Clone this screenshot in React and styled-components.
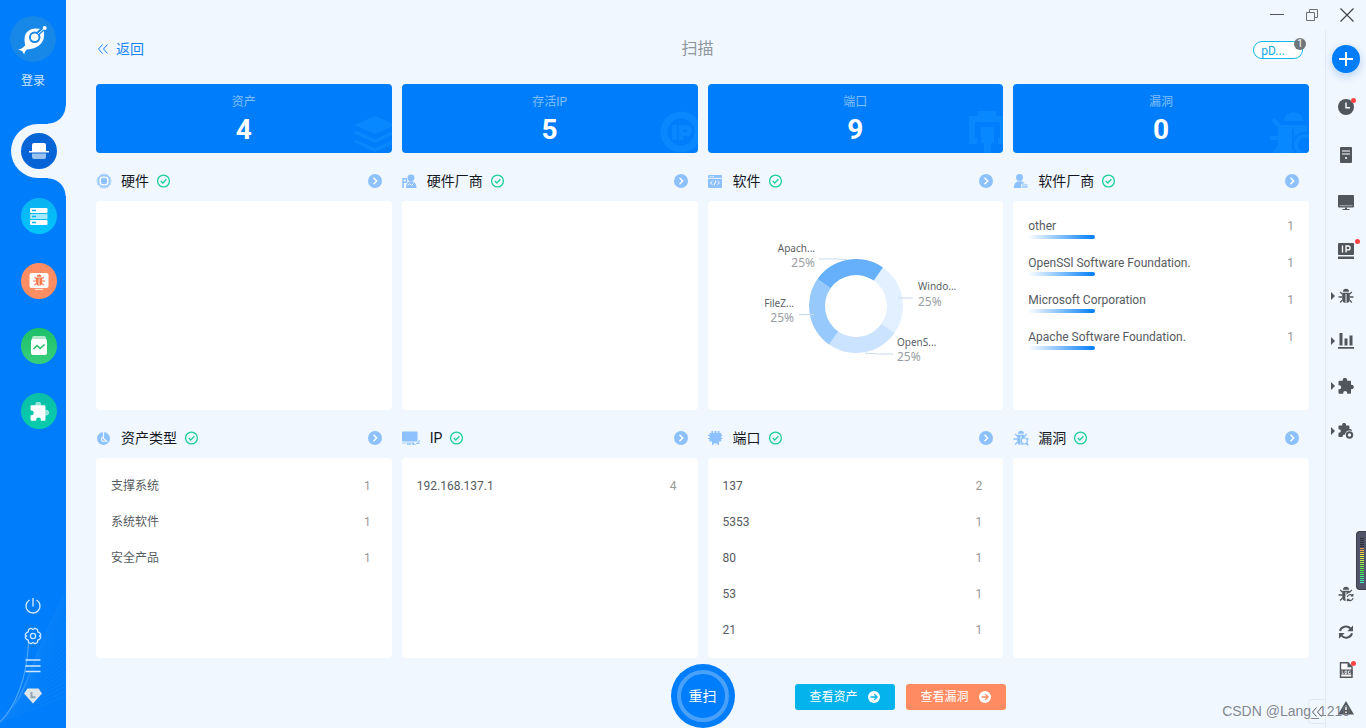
import React from 'react';
import styled, { createGlobalStyle, css } from 'styled-components';

const c = {
  blue: '#007dfa',
  page: '#f0f7ff',
  soft: '#8cc1fe',
  green: '#1ccf9b',
  dark: '#51565c',
};

const GlobalStyle = createGlobalStyle`
  *, *::before, *::after { box-sizing: border-box; }
  body {
    margin: 0;
    background: ${c.page};
    color: #51565c;
    font: 400 12px/18px Roboto, "Noto Sans CJK SC", sans-serif;
  }
  button {
    margin: 0; padding: 0; border: 0; background: none;
    font: inherit; color: inherit; cursor: pointer;
  }
  a { color: inherit; text-decoration: none; }
  ul { margin: 0; padding: 0; list-style: none; }
  h1, h2, p { margin: 0; font-weight: inherit; }
  svg { display: block; flex: none; }
`;

/* ---------- frame ---------- */

const Page = styled.div`
  position: relative;
  display: flex;
  min-height: 100vh;
  overflow: hidden;
`;

const Sidebar = styled.aside`
  position: relative;
  flex: none;
  width: 66px;
  display: flex;
  flex-direction: column;
  align-items: center;
  padding: 16px 0 22px;
  background: ${c.blue};
  color: #cfe6ff;
`;

const Swirl = styled.svg`
  position: absolute;
  left: 0;
  bottom: 0;
`;

const Login = styled.button`
  display: flex;
  flex-direction: column;
  align-items: center;
  gap: 10px;
`;

const Logo = styled.span`
  width: 46px;
  height: 46px;
  border-radius: 50%;
  background: #1787e8;
`;

const Nav = styled.nav`
  width: 100%;
  margin-top: 34px;
  display: flex;
  flex-direction: column;
  gap: 11px;
`;

const NavItem = styled.div`
  position: relative;
  height: 54px;
  margin-left: 11px;
  padding: 9px 10px;
  ${(p) => p.$active && css`
    background: ${c.page};
    border-radius: 27px 0 0 27px;
    &::before, &::after {
      content: '';
      position: absolute;
      right: 0;
      width: 18px;
      height: 18px;
    }
    &::before {
      bottom: 100%;
      background: radial-gradient(circle at 0 0, transparent 17px, ${c.page} 18px);
    }
    &::after {
      top: 100%;
      background: radial-gradient(circle at 0 100%, transparent 17px, ${c.page} 18px);
    }
  `}
`;

const NavButton = styled.button`
  width: 36px;
  height: 36px;
  border-radius: 50%;
  display: grid;
  place-items: center;
  background: ${(p) => p.$fill};
`;

const Tools = styled.div`
  position: relative;
  margin-top: auto;
  display: flex;
  flex-direction: column;
  gap: 10px;
`;

const ToolButton = styled.button`
  width: 20px;
  height: 20px;
  display: grid;
  place-items: center;
`;

const Main = styled.div`
  flex: 1;
  min-width: 0;
  display: flex;
  flex-direction: column;
`;

const TitleBar = styled.div`
  height: 30px;
  display: flex;
  justify-content: flex-end;
  padding-right: 2px;
`;

const WindowButton = styled.button`
  width: 35px;
  display: grid;
  place-items: center;
`;

const Body = styled.div`
  flex: 1;
  display: flex;
`;

const Content = styled.main`
  position: relative;
  flex: 1;
  min-width: 0;
  padding: 0 16px 0 30px;
  display: flex;
  flex-direction: column;
`;

/* ---------- header ---------- */

const Header = styled.header`
  height: 54px;
  padding-bottom: 16px;
  display: grid;
  grid-template-columns: 1fr auto 1fr;
  align-items: center;
`;

const Back = styled.a`
  display: flex;
  align-items: center;
  gap: 6px;
  color: #1a86f8;
  font-size: 14px;
`;

const Title = styled.h1`
  padding-right: 10px;
  font-size: 16px;
  color: #8f959d;
`;

const TaskPill = styled.button`
  position: relative;
  justify-self: end;
  margin: 2px 6px 0 0;
  width: 50px;
  height: 18px;
  padding-right: 10px;
  border: 1px solid #12b7e8;
  border-radius: 9px;
  background: #fff;
  color: #12a9e0;
  line-height: 18px;
`;

const TaskCount = styled.span`
  position: absolute;
  top: -4px;
  right: -4px;
  width: 12px;
  height: 12px;
  border-radius: 50%;
  background: #70757a;
  color: #fff;
  font-size: 10px;
  line-height: 12px;
`;

/* ---------- statistics ---------- */

const Row = styled.div`
  display: grid;
  grid-template-columns: repeat(4, minmax(0, 1fr));
  column-gap: 10px;
  flex: ${(p) => p.$grow || 'none'};
`;

const Stat = styled.div`
  position: relative;
  height: 69px;
  padding-top: 9px;
  overflow: hidden;
  border-radius: 4px;
  background: ${c.blue};
  text-align: center;
  color: #fff;
`;

const StatLabel = styled.p`
  color: #80bffd;
`;

const StatValue = styled.p`
  font-size: 28px;
  line-height: 38px;
  font-weight: 700;
`;

const StatArt = styled.svg`
  position: absolute;
  right: -4px;
  bottom: 0;
`;

/* ---------- panels ---------- */

const Section = styled.section`
  display: flex;
  flex-direction: column;
`;

const SectionHead = styled.div`
  height: 48px;
  padding: 8px 10px 0 0;
  display: flex;
  align-items: center;
`;

const SectionTitle = styled.h2`
  margin: 0 8px 0 9px;
  font-size: 14px;
  line-height: 20px;
  color: #14181e;
`;

const More = styled.button`
  margin-left: auto;
`;

const Card = styled.div`
  flex: 1;
  border-radius: 4px;
  background: #fff;
  display: flex;
  flex-direction: column;
  justify-content: ${(p) => (p.$center ? 'center' : 'flex-start')};
  align-items: ${(p) => (p.$center ? 'center' : 'stretch')};
`;

const CountList = styled.ul`
  padding: 10px 21px 10px 15px;
`;

const CountRow = styled.li`
  height: 36px;
  display: flex;
  align-items: center;
  justify-content: space-between;
`;

const ItemName = styled.span`
  color: #565b61;
`;

const Count = styled.span`
  color: #999;
`;

const VendorList = styled.ul`
  padding: 16px 15px;
  display: grid;
  row-gap: 15px;
`;

const VendorRow = styled.li`
  display: flex;
  justify-content: space-between;
`;

const Bar = styled.span`
  display: block;
  width: 67px;
  height: 4px;
  border-radius: 2px;
  background: linear-gradient(90deg, #fff, ${c.blue});
`;

const ChartLabel = styled.text`
  font: 400 10px "Noto Sans", sans-serif;
  fill: #5a5f66;
`;

const ChartPercent = styled.text`
  font: 400 12px "Noto Sans", sans-serif;
  fill: #999ea4;
`;

/* ---------- footer ---------- */

const Footer = styled.footer`
  padding-top: 6px;
  display: grid;
  grid-template-columns: 1fr 64px 1fr;
  align-items: center;
`;

const Rescan = styled.button`
  grid-column: 2;
  height: 64px;
  padding: 6px;
  border-radius: 50%;
  background: ${c.blue};
`;

const RescanRing = styled.span`
  display: grid;
  place-items: center;
  height: 52px;
  border: 4px solid #4aa1fb;
  border-radius: 50%;
  color: #fff;
  font-size: 14px;
`;

const Actions = styled.div`
  padding: 2px 0 0 60px;
  display: flex;
  gap: 11px;
`;

const Action = styled.button`
  width: 100px;
  height: 26px;
  border-radius: 3px;
  display: flex;
  align-items: center;
  justify-content: center;
  gap: 10px;
  background: ${(p) => p.$fill};
  color: #fff;
`;

/* ---------- right rail ---------- */

const Rail = styled.aside`
  flex: none;
  width: 41px;
  padding: 5px 0 1px;
  display: flex;
  flex-direction: column;
  justify-content: space-between;
  border-left: 1px solid #e3eaf4;
`;

const RailGroup = styled.div`
  margin-top: 1px;
`;

const RailButton = styled.button`
  position: relative;
  width: 40px;
  height: ${(p) => p.$h}px;
  display: grid;
  place-items: center;
  color: ${c.dark};
`;

const AddDisc = styled.span`
  width: 28px;
  height: 28px;
  border-radius: 50%;
  display: grid;
  place-items: center;
  background: ${c.blue};
  box-shadow: 0 3px 8px rgba(0, 90, 200, 0.25);
`;

const Dot = styled.span`
  position: absolute;
  top: calc(50% - ${(p) => (p.$far ? 12 : 9)}px);
  right: ${(p) => (p.$far ? 6 : 10)}px;
  width: 5px;
  height: 5px;
  border-radius: 50%;
  background: #ff4343;
`;

const Caret = styled.span`
  position: absolute;
  left: 5px;
  top: calc(50% - 4px);
  border: 4px solid transparent;
  border-left: 4px solid #51565c;
  border-right: 0;
`;

const Fold = styled.button`
  position: absolute;
  right: 0;
  bottom: 4px;
  width: 17px;
  height: 25px;
  display: grid;
  place-items: center;
  border: 1px solid #e3eaf4;
  border-right: 0;
  border-radius: 4px 0 0 4px;
  color: #51565c;
`;

const Meter = styled.div`
  position: absolute;
  right: 0;
  bottom: 138px;
  width: 10px;
  height: 59px;
  padding: 6px 0 6px 3px;
  border: 1px solid #3a3f4b;
  border-right: 0;
  border-radius: 4px 0 0 4px;
  background: #50556a;
`;

const Watermark = styled.p`
  position: absolute;
  right: 16px;
  bottom: 7px;
  font: 400 14px/20px "Liberation Sans", sans-serif;
  color: rgba(110, 114, 120, 0.85);
  pointer-events: none;
`;

/* ---------- drawings ---------- */

const Chevrons = ({ size = 14, color = 'currentColor' }) => (
  <svg width={size} height={size} viewBox="0 0 14 14" fill="none" stroke={color} strokeWidth="1">
    <path d="M6.5 2.5 2.5 7l4 4.500M11.500 2.500l-4 4.500 4 4.500" />
  </svg>
);

const PUZZLE =
  'M1.300 2.800H4.900A2.200 2.200 0 1 1 9 2.800H12.200a.8.8 0 0 1 .8.8V6.900A2.200 2.200 0 1 1 13 11.100V15a.8.8 0 0 1-.8.8H9.200V15a2 2 0 0 0-4 0v.8H1.300a.8.8 0 0 1-.8-.8V11.200H1.200a2 2 0 0 0 0-4H.5V3.600a.8.8 0 0 1 .8-.8z';

const BugShape = ({ color = 'currentColor', gap = '#fff' }) => (
  <g>
    <path d="M5 3.700a3 2.900 0 0 1 6 0z" fill={color} />
    <path d="M4.200 4.700h7.600v6.300a3.800 4 0 0 1-7.600 0z" fill={color} />
    <path d="M8 6v9" stroke={gap} strokeWidth="1" />
    <path
      d="M4.200 6.200 2.200 3.800M11.800 6.200l2-2.400M4.200 9H.5M11.800 9h3.700M4.500 11.800l-2.300 2.700M11.500 11.800l2.300 2.700"
      stroke={color} strokeWidth="1.300" fill="none"
    />
  </g>
);

const Check = () => (
  <svg width="14" height="14" viewBox="0 0 14 14" fill="none" stroke={c.green} strokeWidth="1.300">
    <circle cx="6.500" cy="7" r="5.900" />
    <path d="m3.800 7 2 2 3.600-3.700" />
  </svg>
);

const ArrowDisc = () => (
  <svg width="14" height="14" viewBox="0 0 14 14">
    <circle cx="7" cy="7" r="7" fill={c.soft} />
    <path d="m5.500 3.700 3.200 3.300-3.200 3.300" fill="none" stroke="#fff" strokeWidth="1.400" />
  </svg>
);

const GoDisc = ({ color }) => (
  <svg width="12" height="12" viewBox="0 0 12 12">
    <circle cx="6" cy="6" r="6" fill="#fff" />
    <path d="M2.500 6h6.500M6.300 3.200 9.100 6 6.300 8.800" fill="none" stroke={color} strokeWidth="1.300" />
  </svg>
);

const sectionIcons = {
  chip: (
    <svg width="16" height="16" viewBox="0 0 16 16" fill="none" stroke={c.soft}>
      <path d="M5 1v2M7 .5V3M9 .5V3M11 1v2M5 13v2M7 13v2.500M9 13v2.500M11 13v2M1 5h2M.5 7H3M.5 9H3M1 11h2M13 5h2M13 7h2.500M13 9h2.500M13 11h2" />
      <rect x="2.800" y="2.800" width="10.400" height="10.400" rx="3" strokeWidth="1.200" />
      <rect x="5.500" y="5.500" width="5" height="5" rx="1" fill={c.soft} />
    </svg>
  ),
  hardwareVendor: (
    <svg width="16" height="16" viewBox="0 0 16 16" fill={c.soft}>
      <circle cx="9" cy="4.800" r="3.400" />
      <path d="M4 15c0-4.500 2-6.800 5-6.800s5.500 2.300 5.500 6.800z" />
      <path d="M1 15V5.800h3.500v3.500H1" fill="none" stroke={c.soft} strokeWidth="1.500" />
      <path d="m5.500 12.500 2-2 2 2 2-2" fill="none" stroke={c.page} />
    </svg>
  ),
  software: (
    <svg width="16" height="16" viewBox="0 0 16 16" fill={c.soft}>
      <rect x="0" y="2" width="14" height="13" rx="1" />
      <path d="M0 5.300h14" stroke={c.page} />
      <path d="M2 3.600h1.500M4.500 3.600H6" stroke={c.page} strokeWidth=".8" />
      <path d="m4.500 8-2 1.900 2 1.900M9.500 8l2 1.900-2 1.900M7.800 7.700l-1.600 4.500" fill="none" stroke="#fff" />
    </svg>
  ),
  softwareVendor: (
    <svg width="16" height="16" viewBox="0 0 16 16" fill={c.soft}>
      <circle cx="6.500" cy="4.400" r="3.500" />
      <path d="M.8 15c0-4.500 2-6.700 5.700-6.700S11.500 10 12 12v3z" />
      <path d="M8.500 11h6.500v4H8.500z" stroke={c.page} strokeWidth=".8" />
      <path d="M8.500 12.800H15" stroke={c.page} strokeWidth=".8" />
    </svg>
  ),
  assetType: (
    <svg width="16" height="16" viewBox="0 0 16 16" fill={c.soft}>
      <circle cx="7.500" cy="8.500" r="6.500" />
      <path d="M7.500 1.500v7l4 3.500M7.500 7a2.200 2.200 0 1 0 2.200 2.800" fill="none" stroke={c.page} strokeWidth="1.200" />
    </svg>
  ),
  ip: (
    <svg width="19" height="16" viewBox="0 0 19 16" fill={c.soft}>
      <rect x="0" y="1.500" width="15.500" height="10" rx="1" />
      <path d="M0 12.500h12v1H9V15H5v-1.500H0z" opacity=".75" />
      <path d="m11 12 2.300 2.600 4-4.600 1 1-2 1.500 2 1.500h-4l-1 1H10z" opacity=".9" />
    </svg>
  ),
  port: (
    <svg width="16" height="16" viewBox="0 0 16 16" fill={c.soft}>
      <path d="M3.500 1h1.700v2H6.500V1h2v2h1.300V1H11.500v2h1.800v8.500H11V15H9.500v-1.500h-4V15H4v-3.500H1.500V3h2z" />
      <path d="M0 5.500h2M0 8.500h2M12.500 5.500h2M12.500 8.500h2" stroke={c.soft} />
    </svg>
  ),
  bug: (
    <svg width="16" height="16" viewBox="0 0 16 16">
      <BugShape color={c.soft} gap={c.page} />
      <circle cx="11.300" cy="11" r="3" fill={c.page} stroke={c.soft} strokeWidth="1.200" />
      <path d="m13.300 13.200 2 2" stroke={c.soft} strokeWidth="1.300" />
    </svg>
  ),
};

const ART = '#0788ff';
const stats = [
  {
    label: '资产', value: 4,
    art: (
      <StatArt width="42" height="39" viewBox="0 0 42 39" fill={ART}>
        <path d="M0 11 21 2l21 9-21 9z" />
        <path d="m1 18 20 9 20-9M1 27l20 9 20-9" fill="none" stroke={ART} strokeWidth="3.500" />
      </StatArt>
    ),
  },
  {
    label: '存活IP', value: 5,
    art: (
      <StatArt width="42" height="42" viewBox="0 0 42 42" fill="none" stroke={ART}>
        <circle cx="21" cy="21" r="17" strokeWidth="7" />
        <path d="M14.500 14v15M21 29V16.500h5.500a3 3 0 0 1 0 6.500H21" strokeWidth="4.500" />
      </StatArt>
    ),
  },
  {
    label: '端口', value: 9,
    art: (
      <StatArt width="38" height="42" viewBox="0 0 38 42" fill={ART}>
        <path d="M0 5H9V0H27V5H36V33H29V27H31V11H6V27H8V33H0z" />
        <path d="M12 16H25V32H22V42H15V32H12z" />
      </StatArt>
    ),
  },
  {
    label: '漏洞', value: 0,
    art: (
      <StatArt width="44" height="42" viewBox="0 0 44 42" fill={ART}>
        <path d="M15 10a9.500 9 0 0 1 19 0z" />
        <path d="M9 14h29v28H9z" />
        <path d="m4 8 7 8M1 27h9M5 42l6-6" stroke={ART} strokeWidth="4" />
        <path d="M24 18v20" stroke={c.blue} strokeWidth="2" />
        <circle cx="36" cy="34" r="12" stroke={c.blue} strokeWidth="2" />
        <circle cx="36" cy="34" r="7" fill={c.blue} />
      </StatArt>
    ),
  },
];

const assetTypes = [['支撑系统', 1], ['系统软件', 1], ['安全产品', 1]];
const ips = [['192.168.137.1', 4]];
const ports = [['137', 2], ['5353', 1], ['80', 1], ['53', 1], ['21', 1]];
const vendors = [
  ['other', 1],
  ['OpenSSl Software Foundation.', 1],
  ['Microsoft Corporation', 1],
  ['Apache Software Foundation.', 1],
];

const Panel = ({ icon, title, children, center }) => (
  <Section>
    <SectionHead>
      {sectionIcons[icon]}
      <SectionTitle>{title}</SectionTitle>
      <Check />
      <More aria-label={`${title} 更多`}><ArrowDisc /></More>
    </SectionHead>
    <Card $center={center}>{children}</Card>
  </Section>
);

const Counts = ({ rows }) => (
  <CountList>
    {rows.map(([name, count]) => (
      <CountRow key={name}>
        <ItemName>{name}</ItemName>
        <Count>{count}</Count>
      </CountRow>
    ))}
  </CountList>
);

const Donut = () => {
  const colors = ['#e3f0ff', '#cce3ff', '#98c9fc', '#66affb'];
  const point = (deg, r) => {
    const a = (deg * Math.PI) / 180;
    return `${100 + r * Math.sin(a)} ${80 - r * Math.cos(a)}`;
  };
  return (
    <svg width="200" height="160" viewBox="-1 0 200 160" overflow="visible" role="img" aria-label="软件">
      {colors.map((fill, i) => {
        const s = 35 + i * 90;
        return (
          <path
            key={fill}
            fill={fill}
            d={`M${point(s, 47)}A47 47 0 0 1 ${point(s + 90, 47)}L${point(s + 90, 31)}A31 31 0 0 0 ${point(s, 31)}z`}
          />
        );
      })}
      <path
        d="M91 33.500 79 33H63M58 88.500H43M142 72h15M109 127l13 1h15"
        fill="none" stroke="#c9dbee"
      />
      <ChartLabel x="59" y="26" textAnchor="end">Apach...</ChartLabel>
      <ChartPercent x="59" y="41" textAnchor="end">25%</ChartPercent>
      <ChartLabel x="38" y="81" textAnchor="end">FileZ...</ChartLabel>
      <ChartPercent x="38" y="96" textAnchor="end">25%</ChartPercent>
      <ChartLabel x="162" y="64">Windo...</ChartLabel>
      <ChartPercent x="162" y="80">25%</ChartPercent>
      <ChartLabel x="141" y="120">OpenS...</ChartLabel>
      <ChartPercent x="141" y="135">25%</ChartPercent>
    </svg>
  );
};

const navItems = [
  {
    name: '扫描', fill: '#0664d6', active: true,
    icon: (
      <svg width="20" height="20" viewBox="0 0 20 20" fill="#fff">
        <path d="M3 10V4a2 2 0 0 1 2-2h10a2 2 0 0 1 2 2v6z" />
        <path d="M0 10h20v1.500H0z" />
        <path d="M3 12.500h14V16a2 2 0 0 1-2 2H5a2 2 0 0 1-2-2z" opacity=".6" />
      </svg>
    ),
  },
  {
    name: '资产', fill: 'linear-gradient(#0ab2f0, #00c4ff)',
    icon: (
      <svg width="18" height="18" viewBox="0 0 18 18" fill="#fff">
        <rect x="0" y="1" width="17.500" height="5" rx="1" />
        <rect x="0" y="7" width="17.500" height="5" rx="1" opacity=".65" />
        <rect x="0" y="13" width="17.500" height="5" rx="1" />
        <path d="M2 3.500h4M2 9.500h4M2 15.500h4" stroke="#08b5f2" strokeWidth="1.500" />
      </svg>
    ),
  },
  {
    name: '漏洞', fill: '#ff8d64',
    icon: (
      <svg width="20" height="20" viewBox="0 0 20 20" fill="#fff">
        <rect x=".5" y="2" width="19" height="15" rx="2" />
        <path d="M6 18.500h8" stroke="#fff" strokeWidth="1.200" opacity=".7" />
        <g transform="translate(3.700 2.800) scale(.8)"><BugShape color="#f7774b" /></g>
      </svg>
    ),
  },
  {
    name: '报告', fill: 'linear-gradient(#1cc069, #37cf7c)',
    icon: (
      <svg width="20" height="20" viewBox="0 0 20 20" fill="#fff">
        <rect x="3" y="0" width="14" height="6" rx="2" opacity=".65" />
        <rect x="2" y="3" width="16" height="16" rx="2" />
        <path d="m4.500 13 3.500-3.500 3.200 3L15.500 8.500" fill="none" stroke="#22bd69" strokeWidth="1.600" />
      </svg>
    ),
  },
  {
    name: '插件', fill: 'linear-gradient(#0abfa8, #08ccac)',
    icon: (
      <svg width="19" height="19" viewBox="0 0 16 16" fill="#fff">
        <path d={PUZZLE} />
        <path d="M4.900 2.800A2.200 2.200 0 1 1 9 2.800zM13 6.900A2.200 2.200 0 1 1 13 11.100z" fill="#8fe6d7" />
      </svg>
    ),
  },
];

const tools = [
  {
    name: '退出',
    icon: (
      <svg width="18" height="18" viewBox="0 0 18 18" fill="none" stroke="#cfe6ff" strokeWidth="1.400">
        <path d="M5.500 3a7 7 0 1 0 7 0M9 1v8.500" />
      </svg>
    ),
  },
  {
    name: '设置',
    icon: (
      <svg width="18" height="18" viewBox="0 0 18 18" fill="none" stroke="#cfe6ff" strokeWidth="1.300" strokeLinejoin="round">
        <path d="M6.200 1.500h1.400l1.400 1 1.400-1h1.400l1.700 1.300.2 2 1.800.8 1.200 1.700v.8L15.300 9l1.400.9v.8l-1.200 1.700-1.800.8-.2 2-1.700 1.300h-1.400l-1.400-1-1.400 1H6.200l-1.700-1.300-.2-2-1.800-.8-1.200-1.700v-.8L2.700 9l-1.400-.9v-.8l1.200-1.700 1.800-.8.2-2z" />
        <circle cx="9" cy="9" r="2.600" />
      </svg>
    ),
  },
  {
    name: '菜单',
    icon: (
      <svg width="16" height="16" viewBox="0 0 16 16" stroke="#cfe6ff" strokeWidth="1.300">
        <path d="M.5 2h15M.5 8h15M.5 13.500h15" />
      </svg>
    ),
  },
  {
    name: '等级',
    icon: (
      <svg width="18" height="16" viewBox="0 0 18 16">
        <path d="M3.500.5h11L18 5.500 9 15.500 0 5.500z" fill="#dfe6ea" />
        <path d="M7.500 4v5.200h4" fill="none" stroke="#8fa6b6" strokeWidth="2" />
      </svg>
    ),
  },
];

const G = ({ children, size = 16 }) => (
  <svg width={size} height={size} viewBox="0 0 16 16" fill="currentColor">{children}</svg>
);

const railTop = [
  {
    name: '历史', dot: true,
    icon: <G><circle cx="8" cy="8" r="8" /><path d="M8 3.500v5.300h4" fill="none" stroke="#fff" strokeWidth="1.400" /></G>,
  },
  {
    name: '主机',
    icon: (
      <G>
        <rect x="2" y="0" width="12" height="16" rx="1" />
        <path d="M4 4h8M4 7h8" stroke="#fff" strokeWidth="1.200" />
        <circle cx="8" cy="11" r="1" fill="#fff" />
      </G>
    ),
  },
  {
    name: '屏幕',
    icon: (
      <G>
        <rect x="0" y="0" width="16" height="12.500" rx="1" />
        <path d="M1.500 10.700h13" stroke="#a9aeb3" />
        <path d="M7 12.500h2V14h2.500v1h-7v-1H7z" />
      </G>
    ),
  },
];

const railGroups = [
  {
    name: 'IP', dot: true,
    icon: (
      <G>
        <rect x="0" y="0" width="16" height="12" rx="1" />
        <path d="M0 13.500h16V16H0z" />
        <path d="M4.500 2.500v7M8 9.500v-6.500h2.200a1.700 1.700 0 0 1 0 3.800H8" fill="none" stroke="#fff" strokeWidth="1.300" />
      </G>
    ),
  },
  { name: '漏洞', caret: true, icon: <G><BugShape gap={c.page} /></G> },
  {
    name: '统计', caret: true,
    icon: <G><path d="M1.500 0h3v12.500h-3zM6.500 5.500h3v7h-3zM11.500 2.500h3v10h-3zM0 14h16v1.700H0z" /></G>,
  },
  { name: '插件', caret: true, icon: <G><path d={PUZZLE} /></G> },
  {
    name: '插件设置', caret: true,
    icon: (
      <G>
        <path d={PUZZLE} transform="scale(.88)" />
        <circle cx="11.500" cy="12" r="4.500" fill={c.page} />
        <circle cx="11.500" cy="12" r="2.700" fill="none" stroke="currentColor" strokeWidth="2" />
      </G>
    ),
  },
];

const railBottom = [
  {
    name: '漏洞更新',
    icon: (
      <G>
        <BugShape gap={c.page} />
        <circle cx="12" cy="11.500" r="4.500" fill={c.page} />
        <path d="M9.300 11a3 3 0 0 1 5-1.500M15 12a3 3 0 0 1-5 1.700M14.800 8v2h-2M9.500 15.300v-2h2" fill="none" stroke="currentColor" strokeWidth="1.200" />
      </G>
    ),
  },
  {
    name: '刷新',
    icon: (
      <G>
        <path d="M2 7a6 5.500 0 0 1 10.500-2.500M14 9.200a6 5.500 0 0 1-10.500 2.500" fill="none" stroke="currentColor" strokeWidth="2" />
        <path d="M15 1.500v5.700H9.300zM1 14.700V9h5.700z" />
      </G>
    ),
  },
  {
    name: '日志', dot: true,
    icon: (
      <G>
        <path d="M2.500.700h7.500L14 4.700v10.600H2.500z" fill="#fff" stroke="currentColor" strokeWidth="1.400" />
        <path d="M9.500.700v4.500H14z" />
        <path d="M2 7.500h12.500v5H2z" />
        <path d="M4.200 8.500v3h1.500M8.800 9H7v2.500h1.800zM12.500 9h-2v2.500h2v-1" fill="none" stroke="#fff" strokeWidth=".8" />
      </G>
    ),
  },
  {
    name: '告警',
    icon: (
      <G>
        <path d="M8 1 16 14.500H0z" />
        <path d="M8 5.500v4.500M8 11.500V13" stroke="#fff" strokeWidth="1.500" />
      </G>
    ),
  },
];

const fan = Array.from({ length: 22 }, (_, i) => i);

/* Level bars from top to bottom: unlit first, then orange down to teal. */
const levels = Array.from({ length: 23 }, (_, i) => (
  i < 5 ? '#2a2d36' : `hsl(${30 + (i - 5) * 8} 85% 60%)`
));

export default function App() {
  return (
    <Page>
      <GlobalStyle />
      <Sidebar>
        <Swirl width="66" height="150" viewBox="0 0 66 150" fill="none">
          <path d="M0 144C16 128 27 100 28.500 64" stroke="#4aa6ff" strokeWidth="1.200" />
          {fan.map((i) => (
            <path
              key={i}
              d={`M${i} ${144 - i * 1.200}Q${30 + i / 3} ${132 - i * 3} 66 ${118 - i * 5}`}
              stroke="#45a2ff" strokeOpacity=".25" strokeWidth=".7"
            />
          ))}
        </Swirl>
        <Login>
          <Logo>
            <svg width="46" height="46" viewBox="0 0 46 46">
              <path d="M8 33.300C11 33.500 13.500 31.500 15.300 29.300 14.300 26 14.200 22 15.200 19 17 15 21 12.700 25 12.600L32.800 13C34.300 15.500 34.400 18.500 33.800 21.500 33 26 30 29.500 26 31.300 23.500 32.600 20 33.400 16.800 33.400 15.500 34.500 14.500 36 14.200 38.500L12.300 35.200z" fill="#fff" />
              <circle cx="24.700" cy="21.300" r="4.800" fill="none" stroke="#1787e8" strokeWidth="2" />
              <path d="M28 17.500 34.500 11.500" stroke="#1787e8" strokeWidth="4" />
              <path d="M28 18 34.500 12" stroke="#fff" strokeWidth="1" />
              <circle cx="34.700" cy="12" r="2" fill="#fff" />
            </svg>
          </Logo>
          登录
        </Login>
        <Nav>
          {navItems.map((n) => (
            <NavItem key={n.name} $active={n.active}>
              <NavButton $fill={n.fill} aria-label={n.name}>{n.icon}</NavButton>
            </NavItem>
          ))}
        </Nav>
        <Tools>
          {tools.map((t) => (
            <ToolButton key={t.name} aria-label={t.name}>{t.icon}</ToolButton>
          ))}
        </Tools>
      </Sidebar>

      <Main>
        <TitleBar>
          <WindowButton aria-label="最小化">
            <svg width="14" height="14" viewBox="0 0 14 14" stroke="#51565c"><path d="M0 6.500h14" /></svg>
          </WindowButton>
          <WindowButton aria-label="还原">
            <svg width="14" height="14" viewBox="0 0 14 14" fill="none" stroke="#6b7076">
              <path d="M1.500 4.500h8v8h-8zM4.500 4.500v-3h8v8h-3" />
            </svg>
          </WindowButton>
          <WindowButton aria-label="关闭">
            <svg width="14" height="14" viewBox="0 0 14 14" stroke="#41464c" strokeWidth="1.200">
              <path d="m.5.500 13 13M13.500.500l-13 13" />
            </svg>
          </WindowButton>
        </TitleBar>
        <Body>
          <Content>
            <Header>
              <Back href="#back"><Chevrons />返回</Back>
              <Title>扫描</Title>
              <TaskPill>pD...<TaskCount>1</TaskCount></TaskPill>
            </Header>

            <Row>
              {stats.map((s) => (
                <Stat key={s.label}>
                  {s.art}
                  <StatLabel>{s.label}</StatLabel>
                  <StatValue>{s.value}</StatValue>
                </Stat>
              ))}
            </Row>

            <Row $grow="1 0 257px">
              <Panel icon="chip" title="硬件" />
              <Panel icon="hardwareVendor" title="硬件厂商" />
              <Panel icon="software" title="软件" center><Donut /></Panel>
              <Panel icon="softwareVendor" title="软件厂商">
                <VendorList>
                  {vendors.map(([name, count]) => (
                    <VendorRow key={name}>
                      <ItemName>{name}<Bar /></ItemName>
                      <Count>{count}</Count>
                    </VendorRow>
                  ))}
                </VendorList>
              </Panel>
            </Row>

            <Row $grow="1 0 248px">
              <Panel icon="assetType" title="资产类型"><Counts rows={assetTypes} /></Panel>
              <Panel icon="ip" title="IP"><Counts rows={ips} /></Panel>
              <Panel icon="port" title="端口"><Counts rows={ports} /></Panel>
              <Panel icon="bug" title="漏洞" />
            </Row>

            <Footer>
              <Rescan><RescanRing>重扫</RescanRing></Rescan>
              <Actions>
                <Action $fill="#04b3ec">查看资产<GoDisc color="#04b3ec" /></Action>
                <Action $fill="#ff8b62">查看漏洞<GoDisc color="#ff8b62" /></Action>
              </Actions>
            </Footer>
            <Fold aria-label="收起"><Chevrons size={14} /></Fold>
          </Content>

          <Rail>
            <div>
              <RailButton $h={48} aria-label="新建">
                <AddDisc>
                  <svg width="14" height="14" viewBox="0 0 14 14" stroke="#fff" strokeWidth="2"><path d="M0 7h14M7 0v14" /></svg>
                </AddDisc>
              </RailButton>
              {railTop.map((r) => (
                <RailButton key={r.name} $h={48} aria-label={r.name}>
                  {r.icon}{r.dot && <Dot />}
                </RailButton>
              ))}
              <RailGroup>
                {railGroups.map((r) => (
                  <RailButton key={r.name} $h={45} aria-label={r.name}>
                    {r.caret && <Caret />}{r.icon}{r.dot && <Dot $far />}
                  </RailButton>
                ))}
              </RailGroup>
            </div>
            <div>
              {railBottom.map((r) => (
                <RailButton key={r.name} $h={38} aria-label={r.name}>
                  {r.icon}{r.dot && <Dot />}
                </RailButton>
              ))}
            </div>
          </Rail>
        </Body>
      </Main>

      <Meter>
        <svg width="4" height="46" viewBox="0 0 4 46" shapeRendering="crispEdges">
          {levels.map((fill, i) => (
            <rect key={fill + i} y={i * 2} width="4" height="1" fill={fill} />
          ))}
        </svg>
      </Meter>
      <Watermark>CSDN @Lang_1210</Watermark>
    </Page>
  );
}
